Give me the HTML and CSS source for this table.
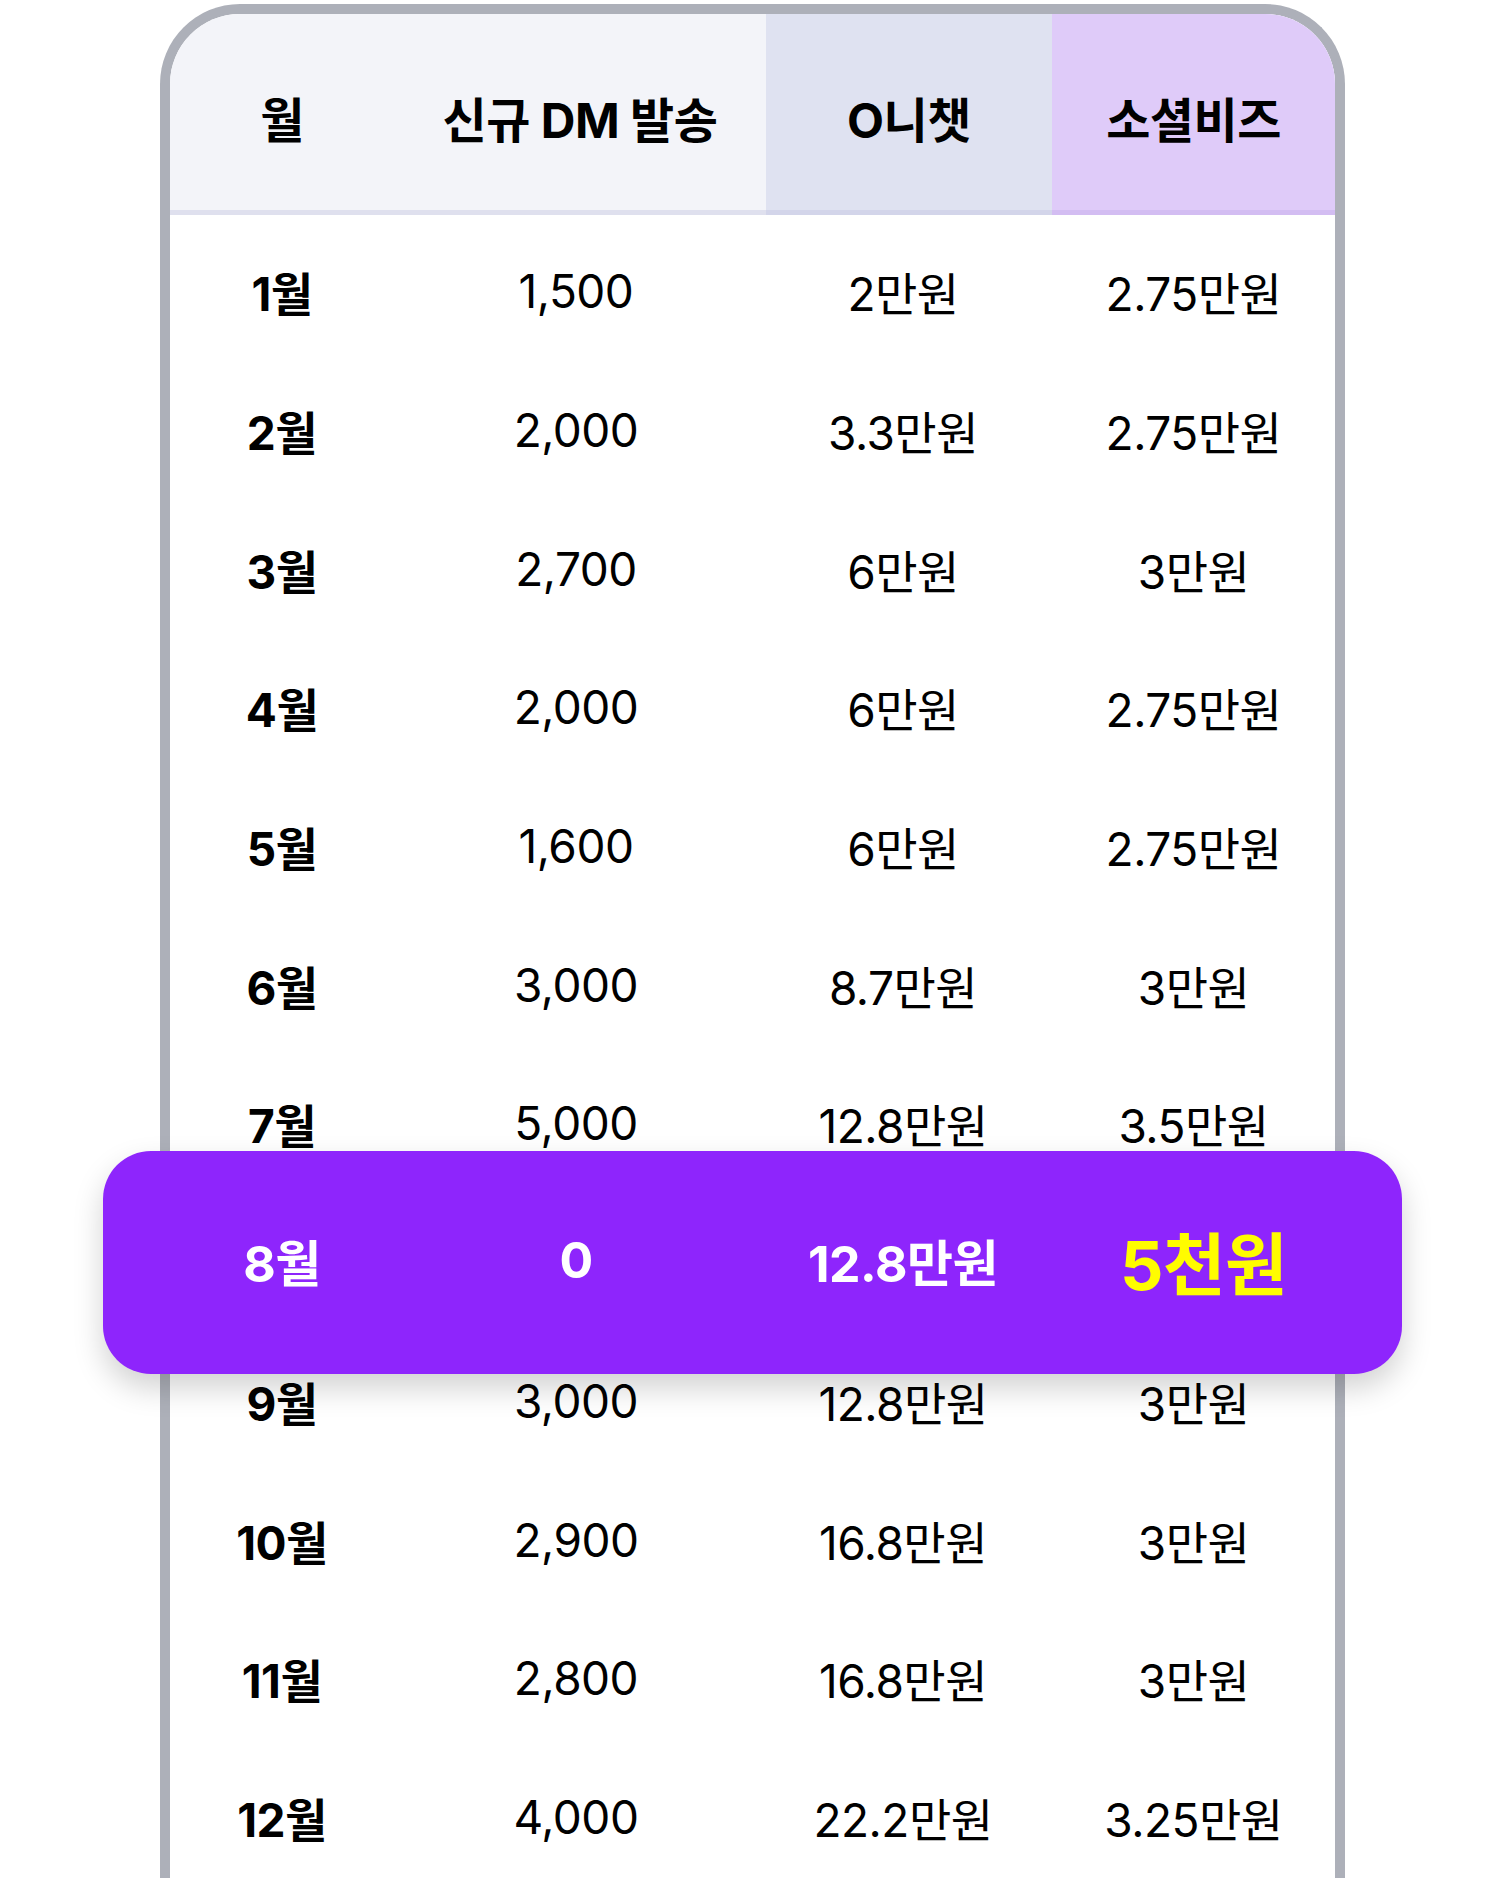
FILE: index.html
```html
<!DOCTYPE html>
<html lang="ko">
<head>
    <meta charset="UTF-8">
    <title>월별 비용 비교</title>
    <meta name="viewport" content="width=device-width, initial-scale=1">
    <link rel="stylesheet" href="styles.css">
</head>
<body>
    <div class="frame">
        <div class="row head">
            <div class="cell">월</div>
            <div class="cell">신규 DM 발송</div>
            <div class="cell col-oni">O니챗</div>
            <div class="cell col-biz">소셜비즈</div>
        </div>

        <div class="list">
            <div class="row"><div class="cell month">1월</div><div class="cell">1,500</div><div class="cell">2만원</div><div class="cell">2.75만원</div></div>
            <div class="row"><div class="cell month">2월</div><div class="cell">2,000</div><div class="cell">3.3만원</div><div class="cell">2.75만원</div></div>
            <div class="row"><div class="cell month">3월</div><div class="cell">2,700</div><div class="cell">6만원</div><div class="cell">3만원</div></div>
            <div class="row"><div class="cell month">4월</div><div class="cell">2,000</div><div class="cell">6만원</div><div class="cell">2.75만원</div></div>
            <div class="row"><div class="cell month">5월</div><div class="cell">1,600</div><div class="cell">6만원</div><div class="cell">2.75만원</div></div>
            <div class="row"><div class="cell month">6월</div><div class="cell">3,000</div><div class="cell">8.7만원</div><div class="cell">3만원</div></div>
            <div class="row"><div class="cell month">7월</div><div class="cell">5,000</div><div class="cell">12.8만원</div><div class="cell">3.5만원</div></div>
            <div class="row current">
                <div class="highlight">
                    <div class="cell">8월</div>
                    <div class="cell">0</div>
                    <div class="cell">12.8만원</div>
                    <div class="cell price">5천원</div>
                </div>
            </div>
            <div class="row"><div class="cell month">9월</div><div class="cell">3,000</div><div class="cell">12.8만원</div><div class="cell">3만원</div></div>
            <div class="row"><div class="cell month">10월</div><div class="cell">2,900</div><div class="cell">16.8만원</div><div class="cell">3만원</div></div>
            <div class="row"><div class="cell month">11월</div><div class="cell">2,800</div><div class="cell">16.8만원</div><div class="cell">3만원</div></div>
            <div class="row"><div class="cell month">12월</div><div class="cell">4,000</div><div class="cell">22.2만원</div><div class="cell">3.25만원</div></div>
        </div>
    </div>
</body>
</html>
```

FILE: styles.css
```css
body {
    margin: 0;
    padding: 0;
    background: #fff;
    color: #000;
    font-family: Inter, "Noto Sans CJK KR", sans-serif;
    overflow: hidden;
}
.frame {
    box-sizing: border-box;
    width: 1185px;
    margin: 4px 0 0 160px;
    border: 10px solid #adb0b9;
    border-bottom: none;
    border-radius: 80px 80px 0 0;
    background: #fff;
}
.row {
    display: grid;
    grid-template-columns: 224px 372px 286px 1fr;
    height: 138.7px;
    align-items: center;
    text-align: center;
    font-size: 46px;
    letter-spacing: -0.5px;
}
.list .row .cell:nth-child(2) {
    padding-right: 8px;
}
.list .row .cell:nth-child(3) {
    padding-right: 12px;
}
.head {
    height: 201px;
    align-items: stretch;
    background: #f3f4f9;
    border-radius: 70px 70px 0 0;
    overflow: hidden;
    font-size: 48px;
    font-weight: 700;
}
.head .cell {
    display: flex;
    align-items: center;
    justify-content: center;
    padding-top: 10px;
    border-bottom: 5px solid #dfe0ee;
}
.head .col-oni {
    background: #dfe2f1;
    border-bottom-color: #d3d5ea;
}
.head .col-biz {
    background: #dfcbf9;
    border-bottom-color: #d3bdf2;
}
.list {
    padding-top: 7px;
}
.month {
    font-weight: 700;
}
.current {
    position: relative;
}
.highlight {
    position: absolute;
    z-index: 2;
    left: -67px;
    right: -67px;
    top: -42px;
    height: 223px;
    box-sizing: border-box;
    padding: 0 67px 4px;
    display: grid;
    grid-template-columns: 224px 372px 286px 1fr;
    align-items: center;
    background: #8e25fc;
    border-radius: 48px;
    box-shadow: 0 14px 30px rgba(0, 0, 0, 0.18);
    color: #fff;
    font-size: 50px;
    font-weight: 700;
}
.highlight .price {
    padding-left: 20px;
    color: #fffc00;
    font-size: 68px;
}
```
